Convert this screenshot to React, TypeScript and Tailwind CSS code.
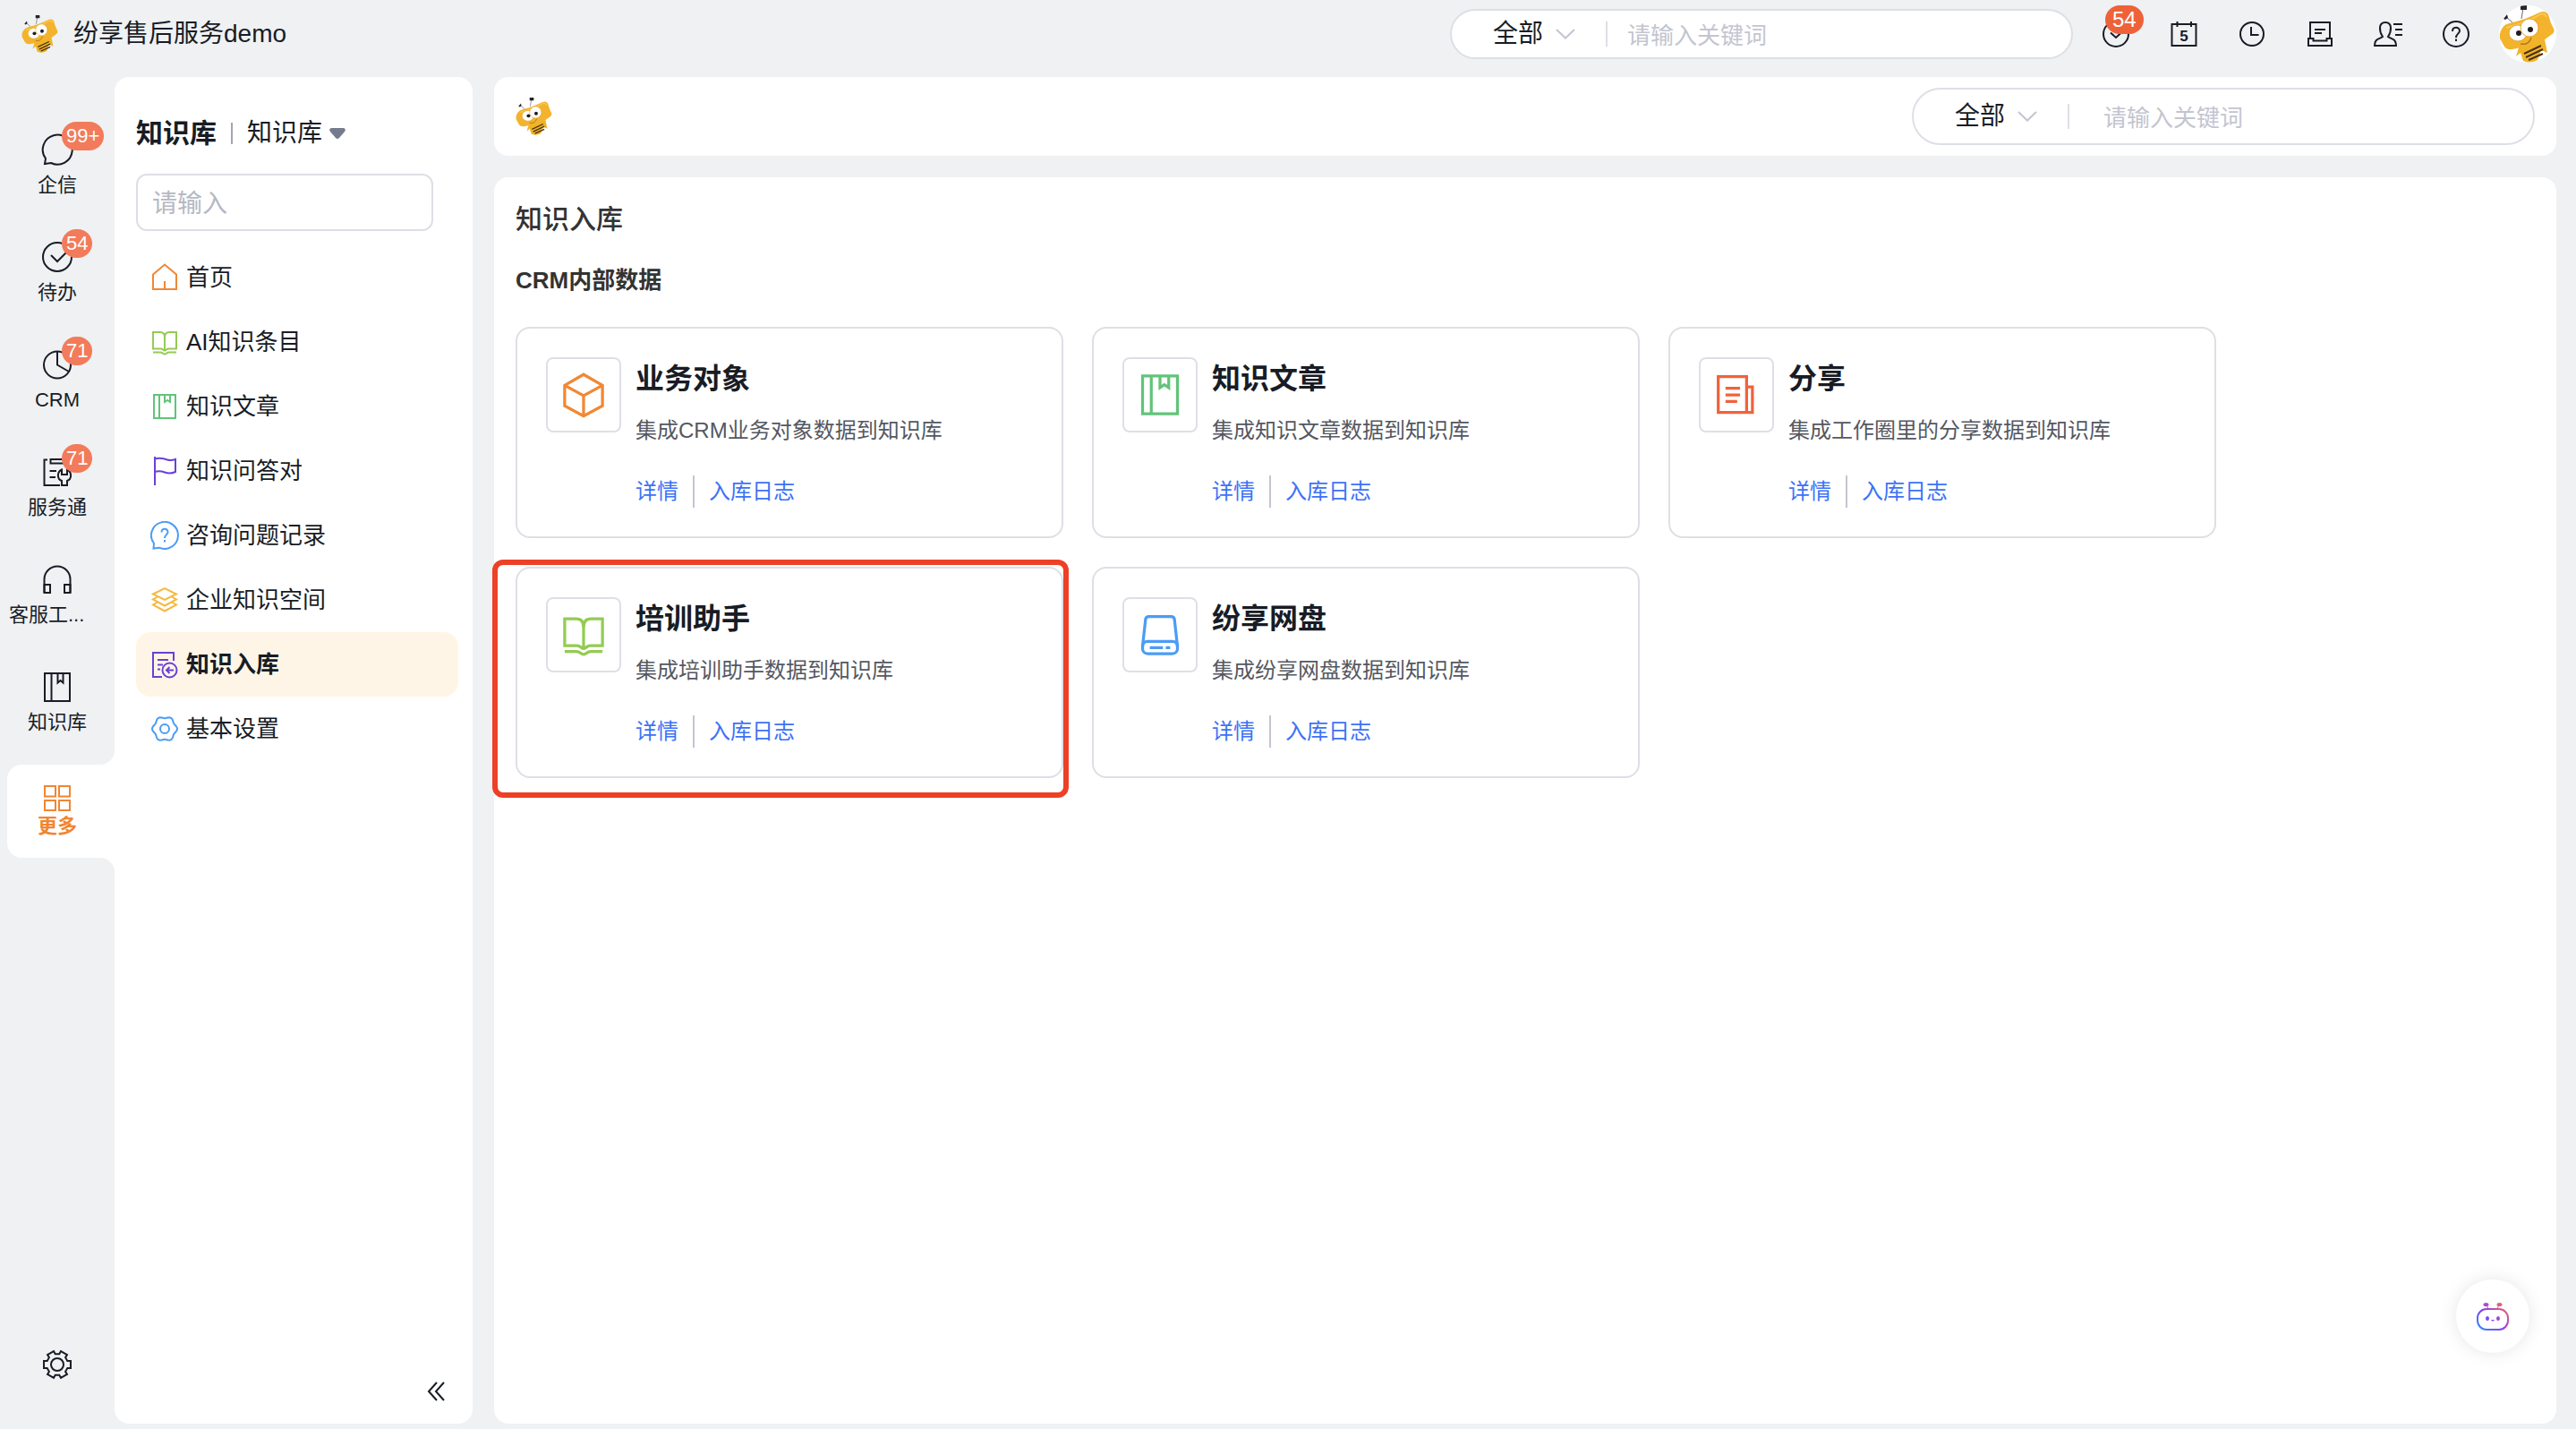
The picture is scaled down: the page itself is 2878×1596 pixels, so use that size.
import type { ReactNode } from "react";

interface RailItem {
  label: string;
  icon: ReactNode;
  badge?: string;
  alignLeft?: boolean;
}

interface MenuItem {
  label: string;
  icon: ReactNode;
  color: string;
  active?: boolean;
}

interface Source {
  title: string;
  desc: string;
  icon: ReactNode;
  color: string;
  marked?: boolean;
}

// closed outline through points given as [radius, degrees] around a center
function polar(points: number[][], c: number) {
  return (
    points
      .map(([r, deg], i) => {
        const a = (deg * Math.PI) / 180;
        const x = (c + r * Math.cos(a)).toFixed(2);
        const y = (c + r * Math.sin(a)).toFixed(2);
        return `${i === 0 ? "M" : "L"}${x} ${y}`;
      })
      .join(" ") + " Z"
  );
}

const wavePath = polar(
  Array.from({ length: 90 }, (_, i) => [
    12.9 + 1.1 * Math.cos((6 * i * 4 * Math.PI) / 180),
    i * 4,
  ]),
  16,
);

const cogPath = polar(
  [0, 60, 120, 180, 240, 300].flatMap((d) => [
    [12, d - 19],
    [15.5, d - 15],
    [15.5, d + 15],
    [12, d + 19],
  ]),
  18,
);

function Icon({
  size = 32,
  className = "size-8",
  children,
}: {
  size?: number;
  className?: string;
  children: ReactNode;
}) {
  return (
    <svg
      viewBox={`0 0 ${size} ${size}`}
      className={`shrink-0 ${className}`}
      fill="none"
      stroke="currentColor"
      strokeWidth="2"
      aria-hidden="true"
    >
      {children}
    </svg>
  );
}

const openBook = (
  <>
    <path d="M16 11C16 7 14 5 11 5H3V23.5H11.5C14 23.5 14.5 25.5 16 25.5S18 23.5 20.5 23.5H29V5H21C18 5 16 7 16 11V25.5" />
    <path d="M3 27.5H11C14 27.5 14 29.5 16 29.5S18 27.5 21 27.5H29" />
  </>
);

const notebook = (
  <>
    <path d="M4 3H28V29H4ZM10 3V29" />
    <path d="M16 3V11L19 9L22 11V3" />
  </>
);

const railItems: RailItem[] = [
  {
    label: "企信",
    badge: "99+",
    icon: <path d="M5 28A16.5 16.5 0 1 1 11 33L4 34Z" />,
  },
  {
    label: "待办",
    badge: "54",
    icon: (
      <>
        <circle cx="18" cy="18" r="16" />
        <path d="M11 16L18 23L28 13" />
      </>
    ),
  },
  {
    label: "CRM",
    badge: "71",
    icon: (
      <>
        <circle cx="18" cy="18.5" r="15" />
        <path d="M18 3.5V18.5L31 26" />
      </>
    ),
  },
  {
    label: "服务通",
    badge: "71",
    icon: (
      <>
        <path d="M7 4.5H3.5V33H21M10.5 8.5V4H27V8.5Z" />
        <path d="M9.5 17H17M9.5 24H16" />
        <path d="M23 15.5C17.5 18 17.5 26 23 28V33H29V28C34.5 26 34.5 18 29 15.5V21H23Z" />
      </>
    ),
  },
  {
    label: "客服工...",
    alignLeft: true,
    icon: (
      <>
        <path d="M3.5 33V18A14.5 14.5 0 0 1 32.5 18V33" />
        <path d="M3.5 24H10V33H3.5ZM26 24H32.5V33H26Z" />
      </>
    ),
  },
  {
    label: "知识库",
    icon: (
      <>
        <path d="M4 3H32V34H4ZM11.5 3V34" />
        <path d="M18.5 3V13.5L21.5 11L24.5 13.5V3" />
      </>
    ),
  },
];

const menuItems: MenuItem[] = [
  {
    label: "首页",
    color: "text-[#f08834]",
    icon: <path d="M3 12.5L16 1.5L29 12.5V29H3ZM16 20V29" />,
  },
  { label: "AI知识条目", color: "text-[#94cb52]", icon: openBook },
  { label: "知识文章", color: "text-[#61c47a]", icon: notebook },
  {
    label: "知识问答对",
    color: "text-[#6a40d6]",
    icon: (
      <path d="M5 0V32M5 2.5C11 1 15 2 19 3.5C22 4.5 25 4 28 3V17C24 19 20 19 16 17.5C12 16 8 16 5 17" />
    ),
  },
  {
    label: "咨询问题记录",
    color: "text-[#4b9cf5]",
    icon: (
      <>
        <path d="M4 25A15 15 0 1 1 10 29.7L3.5 30.5Z" />
        <path d="M12.5 12.5C12.5 7.5 19.5 7.5 19.5 12.5C19.5 15 16 15.5 16 19M16 21V23.5" />
      </>
    ),
  },
  {
    label: "企业知识空间",
    color: "text-[#f6b93f]",
    icon: (
      <path d="M3 9.5L16 3L29 9.5L16 16ZM8 12.5L3 15.5L16 22.5L29 15.5L24 12.5M8 18.5L3 21.5L16 28.5L29 21.5L24 18.5" />
    ),
  },
  {
    label: "知识入库",
    color: "text-[#6a40d6]",
    active: true,
    icon: (
      <>
        <path d="M26 12V3H3V30H13M8 11H20M8 16.5H14M8 21.5H11" />
        <circle cx="21.5" cy="22.5" r="8" />
        <path d="M26 22.5H18.5M21.5 19L18 22.5L21.5 26" />
      </>
    ),
  },
  {
    label: "基本设置",
    color: "text-[#4b9cf5]",
    icon: (
      <>
        <path d={wavePath} />
        <circle cx="16" cy="16" r="5" />
      </>
    ),
  },
];

const sources: Source[] = [
  {
    title: "业务对象",
    desc: "集成CRM业务对象数据到知识库",
    color: "text-[#f08834]",
    icon: (
      <path d="M16 2L29 9.5V23.5L16 30.5L3 23.5V9.5ZM3 9.5L16 16.5L29 9.5M16 16.5V30" />
    ),
  },
  {
    title: "知识文章",
    desc: "集成知识文章数据到知识库",
    color: "text-[#61c47a]",
    icon: notebook,
  },
  {
    title: "分享",
    desc: "集成工作圈里的分享数据到知识库",
    color: "text-[#f0623c]",
    icon: (
      <path d="M3.5 3.5H23V28H3.5ZM23 10.5H27V28H23M8.5 11.5H18.5M8.5 16H18.5M8.5 20.5H16.5" />
    ),
  },
  {
    title: "培训助手",
    desc: "集成培训助手数据到知识库",
    color: "text-[#94cb52]",
    icon: openBook,
    marked: true,
  },
  {
    title: "纷享网盘",
    desc: "集成纷享网盘数据到知识库",
    color: "text-[#4b9cf5]",
    icon: (
      <>
        <path d="M4 24L6 6C6 4.5 7 3.5 8.5 3.5H23.5C25 3.5 26 4.5 26 6L28 24" />
        <rect x="4" y="20.5" width="24" height="8.5" rx="3.5" />
        <path d="M9 24.8H18M20 24.8H23" />
      </>
    ),
  },
];

const tools: { name: string; badge?: string; icon: ReactNode }[] = [
  {
    name: "待办",
    badge: "54",
    icon: (
      <>
        <circle cx="16" cy="16" r="14" />
        <path d="M10 14.5L16 20L22 14.5" />
      </>
    ),
  },
  {
    name: "日历",
    icon: (
      <>
        <path d="M2.5 5H29.5V29H2.5ZM8.5 2V8M24 2V8" />
        <text
          x="16"
          y="24"
          textAnchor="middle"
          fill="currentColor"
          stroke="none"
          className="text-[17px] font-bold"
        >
          5
        </text>
      </>
    ),
  },
  {
    name: "最近",
    icon: (
      <>
        <circle cx="16" cy="16" r="13" />
        <path d="M15 8V17H23.5" />
      </>
    ),
  },
  {
    name: "收件",
    icon: (
      <>
        <path d="M5 20V3H27V20M10 11H22M10 15H18" />
        <path d="M3 21H8.5V23.5H23.5V21H29V29H3Z" />
      </>
    ),
  },
  {
    name: "联系人",
    icon: (
      <>
        <path d="M10 19C6 13 5 3 13 3S20 13 16 19C20 22 25 21 25 29H1C1 21 6 22 10 19Z" />
        <path d="M22 5H32M24 11H32M24 17H32" />
      </>
    ),
  },
  {
    name: "帮助",
    icon: (
      <>
        <circle cx="16" cy="16" r="14" />
        <path d="M12 13C12 7.500 20 7.500 20 12.500C20 15.500 16 16 16 20M16 21.500V24" />
      </>
    ),
  },
];

function Bee({ className }: { className: string }) {
  return (
    <svg viewBox="0 0 64 64" className={`shrink-0 ${className}`} aria-hidden="true">
      <path d="M8 13L16 20M27 3L25 15" stroke="#6b6672" fill="none" />
      <path d="M5 15L9 10L10 14L7 16ZM24 0H31V5H24Z" fill="#26222a" />
      <path d="M23 44L19 57L24 53L27 62Q35 66 43 61L47 50L54 53L51 38Z" fill="#f0b429" />
      <path
        d="M4 25Q6 21 12 20Q32 15 45 8Q52 5 55 10Q57 19 61 26Q63 30 58 33L50 39Q44 44 36 44Q28 45 20 48Q9 51 6 46L1 37Q0 30 4 25Z"
        fill="#f3b32c"
      />
      <path d="M8 25Q30 20 46 10Q51 8 53 13" stroke="#fac94f" strokeWidth="2" fill="none" />
      <ellipse cx="21" cy="31" rx="10" ry="9" fill="#fff" stroke="#e3a838" />
      <circle cx="34" cy="25" r="10" fill="#fff" stroke="#e3a838" />
      <circle cx="22" cy="31" r="3" fill="#201c22" />
      <circle cx="35" cy="27" r="3" fill="#201c22" />
      <path d="M24 43Q33 45 36 36" stroke="#b27a1c" strokeWidth="1.5" fill="none" />
      <path d="M28 54L47 45M30 58L49 49M33 61L49 54" stroke="#4a3211" strokeWidth="2" />
    </svg>
  );
}

function SearchBox({ name, tall = false }: { name: string; tall?: boolean }) {
  return (
    <div
      className={`flex w-[696px] items-center rounded-full border-2 border-[#dedfe6] bg-white pl-[46px] ${
        tall ? "h-16" : "h-14"
      }`}
    >
      <select
        aria-label={`${name}范围`}
        className="w-14 appearance-none bg-transparent text-[28px] leading-10 outline-none"
      >
        <option>全部</option>
      </select>
      <svg
        viewBox="0 0 22 12"
        className="ml-3.5 h-3 w-[22px]"
        fill="none"
        stroke="#c3c5d0"
        strokeWidth="2"
        aria-hidden="true"
      >
        <path d="M1 1L11 10.5L21 1" />
      </svg>
      <span className="ml-[34px] h-7 w-0.5 bg-[#dedfe6]" />
      <input
        type="search"
        aria-label={name}
        placeholder="请输入关键词"
        className={`min-w-0 flex-1 bg-transparent pr-8 pt-1 text-[26px] leading-10 outline-none placeholder:text-[#c3c5d0] ${
          tall ? "pl-[38px]" : "pl-[22px]"
        }`}
      />
    </div>
  );
}

function Badge({ children, className }: { children: ReactNode; className: string }) {
  return (
    <span className={`absolute h-8 rounded-full text-center leading-8 text-white ${className}`}>
      {children}
    </span>
  );
}

function Header() {
  return (
    <header className="flex h-[76px] items-center pl-6 pr-[22px]">
      <Bee className="size-[42px]" />
      <span className="ml-4 text-[28px] leading-10">纷享售后服务demo</span>
      <div className="ml-auto">
        <SearchBox name="全局搜索" />
      </div>
      <div className="mx-8 flex gap-11">
        {tools.map((t) => (
          <button key={t.name} type="button" aria-label={t.name} className="relative">
            <Icon>{t.icon}</Icon>
            {t.badge && (
              <Badge className="-top-4 left-1 bg-[#ee6239] px-2 text-2xl leading-8">{t.badge}</Badge>
            )}
          </button>
        ))}
      </div>
      <button type="button" aria-label="个人中心" className="overflow-hidden rounded-full bg-white">
        <Bee className="size-16" />
      </button>
    </header>
  );
}

function Rail() {
  return (
    <nav className="flex w-32 shrink-0 flex-col pt-[42px] text-[22px] leading-7">
      {railItems.map((item) => (
        <a
          key={item.label}
          href="#"
          className="relative flex h-[120px] flex-col items-center gap-2 pt-[31px]"
        >
          <Icon size={36} className="size-9">
            {item.icon}
          </Icon>
          <span className={`w-[108px] ${item.alignLeft ? "text-left" : "text-center"}`}>
            {item.label}
          </span>
          {item.badge && (
            <Badge className="left-[69px] top-[18px] bg-[#f27b5b] px-[5px]">{item.badge}</Badge>
          )}
        </a>
      ))}
      <a
        href="#"
        className="relative ml-2 mt-4 flex h-[104px] flex-col items-center rounded-l-2xl bg-white pr-2 pt-[19px] font-bold text-[#f08632]"
      >
        <span className="absolute -top-4 right-0 size-4 bg-white">
          <span className="block size-full rounded-br-2xl bg-[#eff1f3]" />
        </span>
        <span className="absolute -bottom-4 right-0 size-4 bg-white">
          <span className="block size-full rounded-tr-2xl bg-[#eff1f3]" />
        </span>
        <Icon size={36} className="size-9">
          <path d="M4 5H16V16.5H4ZM20 5H32V16.5H20ZM4 21H16V32H4ZM20 21H32V32H20Z" />
        </Icon>
        更多
      </a>
      <button type="button" aria-label="设置" className="mb-12 mt-auto self-center">
        <Icon size={36} className="size-9">
          <path d={cogPath} />
          <circle cx="18" cy="18" r="7" />
        </Icon>
      </button>
    </nav>
  );
}

function Sidebar() {
  return (
    <aside className="mt-2.5 flex w-[400px] shrink-0 flex-col rounded-2xl bg-white pb-6 pl-6 pr-4 pt-[42px]">
      <div className="flex h-[42px] items-center">
        <h1 className="text-[30px] font-bold leading-10">知识库</h1>
        <span className="mx-4 h-6 w-0.5 bg-[#a3a6b2]" />
        <button type="button" className="flex items-center gap-2 text-[28px] leading-10">
          知识库
          <svg viewBox="0 0 18 12" className="h-3 w-[18px]" fill="#747b8c" aria-hidden="true">
            <path d="M2 0H16Q19 1 17 4L11 11Q9 13 7 11L1 4Q-1 1 2 0Z" />
          </svg>
        </button>
      </div>
      <input
        type="text"
        aria-label="搜索菜单"
        placeholder="请输入"
        className="mr-7 mt-6 h-16 rounded-xl border-2 border-[#dedfe6] px-4 pt-1 text-[28px] outline-none placeholder:text-[#b6b8c3]"
      />
      <nav className="mt-4 flex flex-col text-[26px] leading-9">
        {menuItems.map((m) => (
          <a
            key={m.label}
            href="#"
            className={`flex h-[72px] items-center gap-2 rounded-2xl pl-4 ${
              m.active ? "bg-[#fff5e6] font-bold" : ""
            }`}
          >
            <Icon className={`size-8 ${m.color}`}>{m.icon}</Icon>
            {m.label}
          </a>
        ))}
      </nav>
      <button type="button" aria-label="收起" className="mr-3 mt-auto self-end">
        <Icon size={24} className="size-6">
          <path d="M12 2L3 12L12 22M20 2L11 12L20 22" />
        </Icon>
      </button>
    </aside>
  );
}

function SourceCard({ source }: { source: Source }) {
  return (
    <article className="relative flex h-[236px] w-[612px] gap-4 rounded-2xl border-2 border-[#dedfe6] p-8">
      <div
        className={`flex size-[84px] shrink-0 items-center justify-center rounded-lg border-2 border-[#dedfe6] ${source.color}`}
      >
        <Icon className="size-[52px]">{source.icon}</Icon>
      </div>
      <div className="text-2xl leading-9">
        <h3 className="text-[32px] font-bold leading-[48px]">{source.title}</h3>
        <p className="mt-4 text-[#545861]">{source.desc}</p>
        <div className="mt-8 flex gap-4 text-[#3c72f6]">
          <a href="#">详情</a>
          <span className="w-0.5 bg-[#c3c5d0]" />
          <a href="#">入库日志</a>
        </div>
      </div>
      {source.marked && (
        <span className="pointer-events-none absolute -bottom-6 -left-7 -right-2 -top-2.5 rounded-xl border-6 border-[#ec4126]" />
      )}
    </article>
  );
}

function AssistantButton() {
  return (
    <button
      type="button"
      aria-label="智能助手"
      className="fixed bottom-[85px] right-[52px] flex size-[82px] items-center justify-center rounded-full bg-white shadow-[0_0_20px_rgba(0,0,0,0.1)]"
    >
      <svg viewBox="0 0 36 32" className="h-8 w-9" fill="none" aria-hidden="true">
        <defs>
          <linearGradient id="bot" x1="4" y1="32" x2="32" y2="2" gradientUnits="userSpaceOnUse">
            <stop offset="0" stopColor="#2f8bff" />
            <stop offset="0.45" stopColor="#8a3df0" />
            <stop offset="1" stopColor="#f8695c" />
          </linearGradient>
        </defs>
        <rect x="1" y="8" width="34" height="23" rx="10" stroke="url(#bot)" strokeWidth="2" />
        <path d="M11 3L13 8M25 3L23 8" stroke="url(#bot)" />
        <g fill="url(#bot)">
          <ellipse cx="10.5" cy="3" rx="3" ry="2" />
          <ellipse cx="25.5" cy="3" rx="3" ry="2" />
          <ellipse cx="12" cy="18.5" rx="2" ry="2.5" />
          <ellipse cx="24" cy="18.5" rx="2" ry="2.5" />
          <path d="M16 20H20Q18 23 16 20Z" />
        </g>
      </svg>
    </button>
  );
}

export default function App() {
  return (
    <div className="flex min-h-screen flex-col bg-[#eff1f3] pb-1.5 font-['Liberation_Sans','Noto_Sans_CJK_SC',sans-serif] text-[#181c25]">
      <Header />
      <div className="flex flex-1">
        <Rail />
        <Sidebar />
        <div className="ml-6 mr-[22px] mt-2.5 flex min-w-0 flex-1 flex-col gap-6">
          <div className="flex h-[88px] items-center justify-between rounded-2xl bg-white px-6">
            <Bee className="size-[42px]" />
            <SearchBox name="知识搜索" tall />
          </div>
          <main className="flex-1 rounded-2xl bg-white p-6 text-[#333]">
            <h2 className="text-[30px] font-medium leading-[46px]">知识入库</h2>
            <h3 className="mt-[27px] text-[26px] font-bold leading-9">CRM内部数据</h3>
            <div className="mt-[34px] flex flex-wrap gap-8 text-[#181c25]">
              {sources.map((s) => (
                <SourceCard key={s.title} source={s} />
              ))}
            </div>
          </main>
        </div>
      </div>
      <AssistantButton />
    </div>
  );
}
